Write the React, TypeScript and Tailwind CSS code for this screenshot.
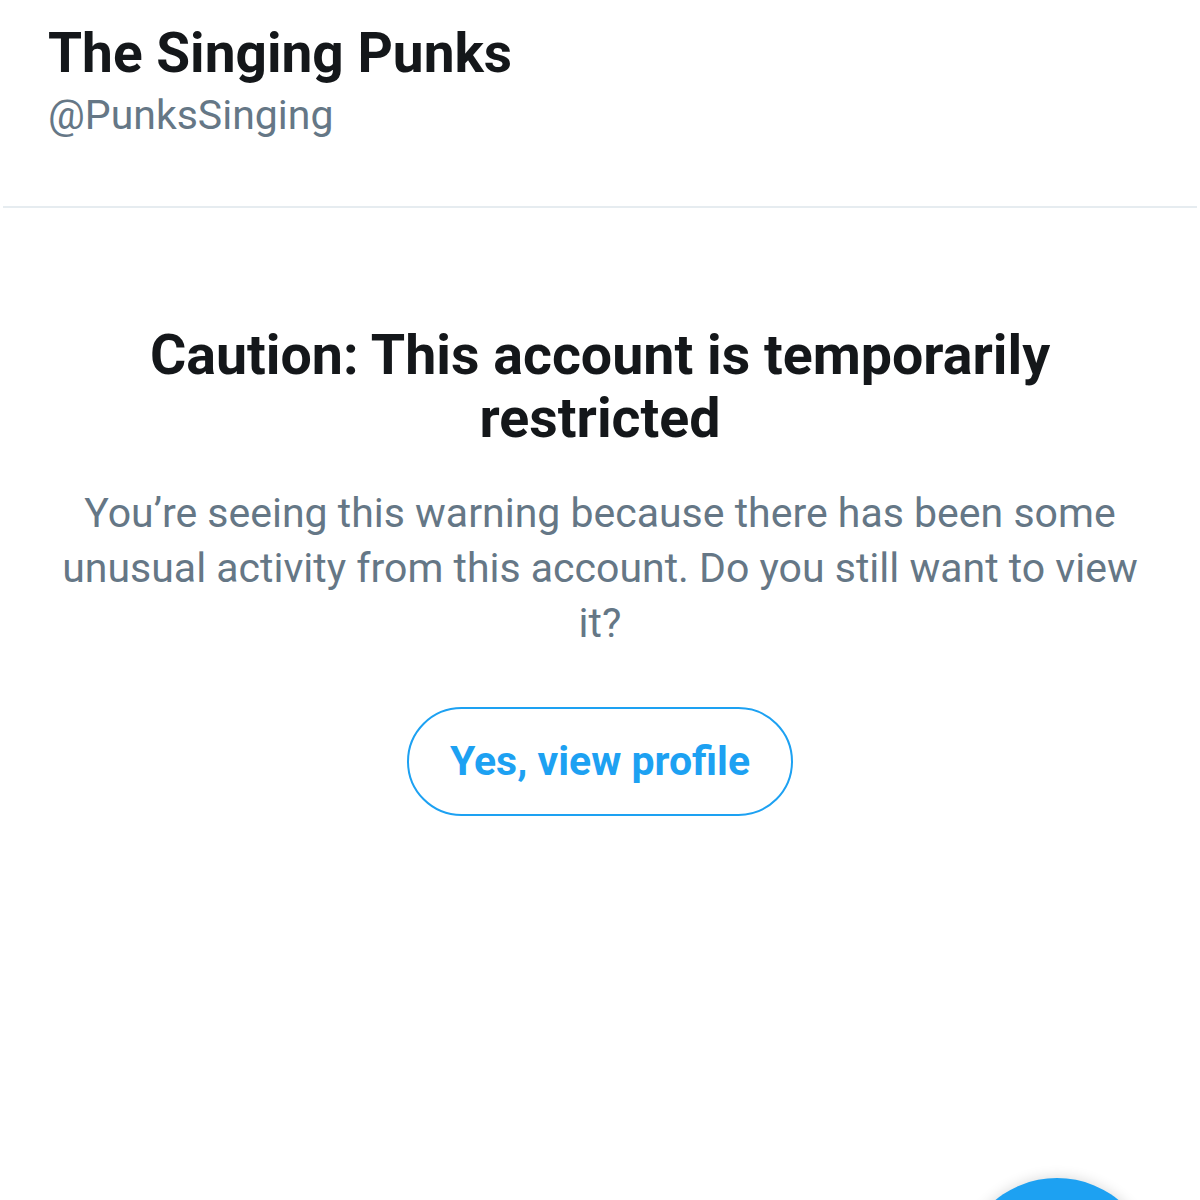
export default function App() {
  return (
    <div className="relative h-[1200px] w-[1200px] overflow-hidden bg-white font-['Roboto',sans-serif]">
      <header className="px-12 pt-[21px] pb-[68px]">
        <h1 className="text-[55px] font-bold leading-[64px] text-[#14171a]">The Singing Punks</h1>
        <p className="mt-[7px] text-[41px] leading-[46px] text-[#657786]">@PunksSinging</p>
      </header>
      <div className="mx-[3px] h-[2px] bg-[#e6ecf0]" />
      <main className="flex flex-col items-center px-[60px] pt-[116px] text-center">
        <h2 className="max-w-[960px] text-[55.5px] font-bold leading-[63px] text-[#14171a]">
          Caution: This account is temporarily restricted
        </h2>
        <p className="mt-[36px] text-[41px] leading-[55px] text-[#657786]">
          You’re seeing this warning because there has been some unusual activity from this account. Do you still want to view it?
        </p>
        <button className="mt-[56px] h-[109px] w-[386px] rounded-full border-2 border-[#1da1f2] text-[41px] font-bold text-[#1da1f2]">
          Yes, view profile
        </button>
      </main>
      <div className="absolute left-[960px] top-[1178px] h-[194px] w-[194px] rounded-full bg-[#1da1f2] shadow-[0_0_14px_rgba(0,0,0,0.16)]" />
    </div>
  );
}
